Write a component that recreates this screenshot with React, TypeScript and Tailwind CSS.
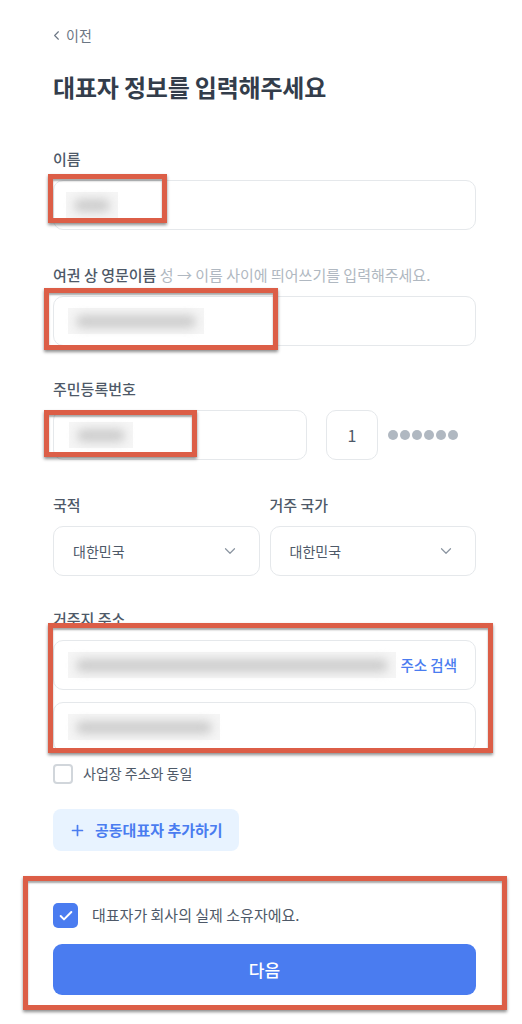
import React from 'react';
import { ChevronLeft, ChevronDown, Plus, Check } from 'lucide-react';

const inputBox = 'h-[50px] rounded-[10px] border border-[#e5e8eb] bg-white';

// blurred value placeholder (masked personal data in the screenshot)
const Blur = ({ w, className = '' }: { w: number; className?: string }) => (
  <div className={`h-[26px] bg-[#f5f5f5] flex items-center px-[8px] ${className}`} style={{ width: w }}>
    <div className="h-[13px] w-full rounded-full bg-[#cdcdcd] blur-[5px]" />
  </div>
);

const Label = ({ children, className = '' }: { children: React.ReactNode; className?: string }) => (
  <div className={`h-[20px] leading-[20px] text-[15px] font-medium text-[#4e5968] ${className}`}>
    {children}
  </div>
);

const Mark = ({ className }: { className: string }) => (
  <div
    className={`absolute border-[5px] border-[#dc5e47] shadow-[0_2px_3px_rgba(0,0,0,0.45),inset_0_2px_2px_rgba(0,0,0,0.35)] pointer-events-none ${className}`}
  />
);

const Select = ({ value }: { value: string }) => (
  <div className={`${inputBox} flex-1 flex items-center justify-between pl-[19px] pr-[20px]`}>
    <span className="text-[14px] text-[#4e5968]">{value}</span>
    <ChevronDown size={18} strokeWidth={1.6} className="text-[#8b95a1]" />
  </div>
);

export default function App() {
  return (
    <div className="relative w-[522px] min-h-[1024px] bg-white font-['Noto_Sans_CJK_KR','Noto_Sans',sans-serif]">
      <div className="px-[53px] pt-[25px] pb-[30px] w-[529px]">
        {/* back */}
        <div className="h-[20px] flex items-center gap-[2px] text-[14px] text-[#6b7684] -ml-[4px]">
          <ChevronLeft size={15} strokeWidth={1.8} />
          <span>이전</span>
        </div>

        <h1 className="mt-[28px] h-[28px] leading-[28px] text-[24px] font-bold text-[#333d4b] tracking-[-0.2px]">
          대표자 정보를 입력해주세요
        </h1>

        {/* 이름 */}
        <Label className="mt-[48px]">이름</Label>
        <div className={`${inputBox} mt-[11px] flex items-center pl-[12px]`}>
          <Blur w={52} />
        </div>

        {/* 영문이름 */}
        <Label className="mt-[35px]">
          여권 상 영문이름{' '}
          <span className="font-normal text-[#b0b8c1]">성 → 이름 사이에 띄어쓰기를 입력해주세요.</span>
        </Label>
        <div className={`${inputBox} mt-[11px] flex items-center pl-[14px]`}>
          <Blur w={136} />
        </div>

        {/* 주민등록번호 */}
        <Label className="mt-[33px]">주민등록번호</Label>
        <div className="mt-[11px] flex items-center">
          <div className={`${inputBox} w-[254px] flex items-center pl-[15px]`}>
            <Blur w={64} />
          </div>
          <div className={`${inputBox} ml-[19px] w-[52px] flex items-center justify-center text-[16px] text-[#4e5968]`}>
            1
          </div>
          <div className="ml-[10px] flex gap-[2px]">
            {[0, 1, 2, 3, 4, 5].map(i => (
              <span key={i} className="w-[10px] h-[10px] rounded-full bg-[#b0b8c1]" />
            ))}
          </div>
        </div>

        {/* 국적 / 거주 국가 */}
        <div className="mt-[35px] flex gap-[10px]">
          <div className="flex-1">
            <Label>국적</Label>
            <div className="mt-[11px] flex">
              <Select value="대한민국" />
            </div>
          </div>
          <div className="flex-1">
            <Label>거주 국가</Label>
            <div className="mt-[11px] flex">
              <Select value="대한민국" />
            </div>
          </div>
        </div>

        {/* 거주지 주소 */}
        <Label className="mt-[33px]">거주지 주소</Label>
        <div className={`${inputBox} mt-[11px] flex items-center justify-between pl-[14px] pr-[18px]`}>
          <Blur w={328} />
          <span className="text-[14.5px] font-medium text-[#4a7cf0]">주소 검색</span>
        </div>
        <div className={`${inputBox} mt-[12px] flex items-center pl-[14px]`}>
          <Blur w={152} />
        </div>

        <label className="mt-[11px] flex items-center gap-[10px]">
          <span className="w-[20px] h-[20px] rounded-[4px] border-2 border-[#d1d6db] bg-white" />
          <span className="text-[14px] text-[#4e5968]">사업장 주소와 동일</span>
        </label>

        <button className="mt-[25px] h-[42px] px-[16px] rounded-[8px] bg-[#e8f3ff] flex items-center gap-[9px] text-[15px] font-semibold text-[#4a7cf0]">
          <Plus size={17} strokeWidth={2.4} />
          <span>공동대표자 추가하기</span>
        </button>

        <label className="mt-[52px] flex items-center gap-[14px]">
          <span className="w-[25px] h-[25px] rounded-[5px] bg-[#4a7cf0] flex items-center justify-center">
            <Check size={16} strokeWidth={3} className="text-white" />
          </span>
          <span className="text-[15px] text-[#4e5968]">대표자가 회사의 실제 소유자에요.</span>
        </label>

        <button className="mt-[16px] w-full h-[51px] rounded-[9px] bg-[#4a7cf0] text-white text-[17px] font-medium">
          다음
        </button>
      </div>

      {/* annotation highlights */}
      <Mark className="left-[48px] top-[174px] w-[119px] h-[49px]" />
      <Mark className="left-[44px] top-[288px] w-[234px] h-[62px]" />
      <Mark className="left-[44px] top-[410px] w-[153px] h-[47px]" />
      <Mark className="left-[48px] top-[623px] w-[445px] h-[130px]" />
      <Mark className="left-[23px] top-[876px] w-[484px] h-[134px]" />
    </div>
  );
}
